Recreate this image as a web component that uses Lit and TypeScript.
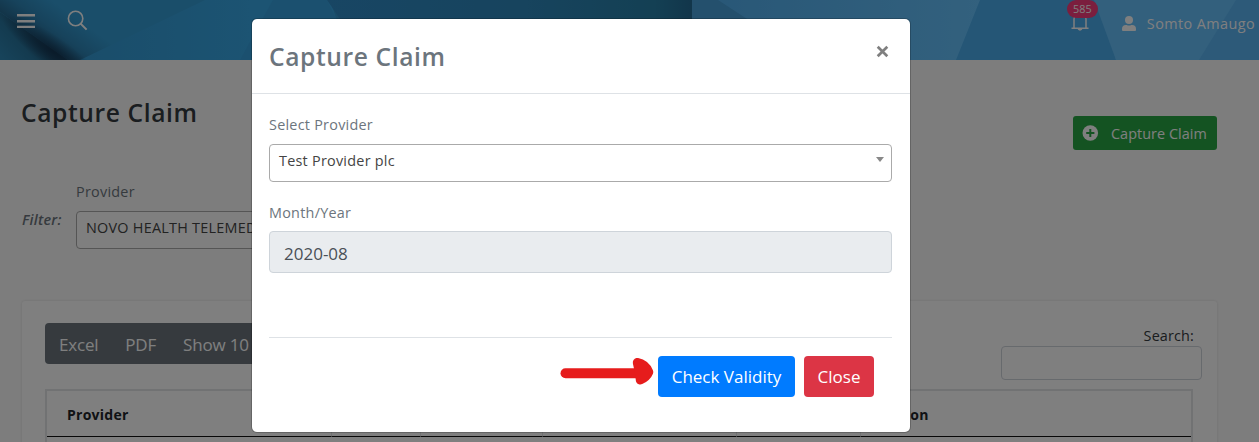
import { LitElement, html, css, svg } from "lit";
import { customElement } from "lit/decorators.js";

const headerArt = svg`
  <defs>
    <linearGradient id="g-shadow" gradientUnits="userSpaceOnUse" x1="33" y1="36" x2="56" y2="4">
      <stop offset="0" stop-color="#266890"/>
      <stop offset=".45" stop-color="#2e86b8"/>
      <stop offset="1" stop-color="#349cd4"/>
    </linearGradient>
    <radialGradient id="g-dark" gradientUnits="userSpaceOnUse" cx="0" cy="0" r="1" gradientTransform="translate(54 52) rotate(35) scale(62 15)">
      <stop offset="0" stop-color="#102c48" stop-opacity=".75"/>
      <stop offset="1" stop-color="#102c48" stop-opacity="0"/>
    </radialGradient>
    <linearGradient id="g-corner" gradientUnits="userSpaceOnUse" x1="5" y1="60" x2="33" y2="36">
      <stop offset="0" stop-color="#2e86b4"/>
      <stop offset=".6" stop-color="#28769f"/>
      <stop offset="1" stop-color="#205678"/>
    </linearGradient>
    <linearGradient id="g-mid" gradientUnits="userSpaceOnUse" x1="325" y1="0" x2="692" y2="0">
      <stop offset="0" stop-color="#308cc8"/>
      <stop offset=".55" stop-color="#2e88bc"/>
      <stop offset=".9" stop-color="#2880a8"/>
      <stop offset="1" stop-color="#246c96"/>
    </linearGradient>
    <linearGradient id="g-ray" gradientUnits="userSpaceOnUse" x1="80" y1="0" x2="250" y2="0">
      <stop offset="0" stop-color="#349ad4"/>
      <stop offset="1" stop-color="#38a8e6"/>
    </linearGradient>
    <linearGradient id="g-right" gradientUnits="userSpaceOnUse" x1="692" y1="0" x2="980" y2="0">
      <stop offset="0" stop-color="#50aeee"/>
      <stop offset="1" stop-color="#66c2fc"/>
    </linearGradient>
  </defs>
  <rect width="1259" height="60" fill="#3498d0"/>
  <polygon points="0,0 330,0 330,60 68,60 0,12" fill="url(#g-shadow)"/>
  <polygon points="80,60 205,0 330,0 350,60" fill="url(#g-ray)"/>
  <polygon points="0,12 68,60 0,60" fill="url(#g-corner)"/>
  <rect width="130" height="60" fill="url(#g-dark)"/>
  <polygon points="240,60 273,0 327,0 357,60" fill="#36a0de"/>
  <polygon points="327,0 692,0 692,60 368,60" fill="url(#g-mid)"/>
  <polygon points="692,0 1259,0 1259,60 692,60" fill="url(#g-right)"/>
  <polygon points="692,0 718,0 810,60 692,60" fill="#48a0da"/>
  <polygon points="980,0 1100,0 1116,60 956,60" fill="#4aacec"/>
  <polygon points="1094,0 1259,0 1259,60 1116,60" fill="#66c0fa"/>
  <polygon points="1236,0 1259,0 1259,60 1199,60" fill="#5ab4f2"/>
`;

@customElement("app-root")
class AppRoot extends LitElement {
  static styles = css`
    :host {
      display: block;
      position: relative;
      width: 1259px;
      height: 442px;
      overflow: hidden;
      background: #fbfbfb;
      font: 14.4px/20px "Open Sans", "Noto Sans", sans-serif;
      letter-spacing: 0.25px;
      color: #6c757d;
    }
    * { box-sizing: border-box; }
    h1, h2, p { margin: 0; }
    button, input { font: inherit; letter-spacing: inherit; border: 0; margin: 0; padding: 0; }
    svg { display: block; flex: none; }
    .topbar { position: relative; height: 60px; }
    .art { position: absolute; inset: 0; }
    .nav { position: relative; display: flex; align-items: flex-start; height: 60px; padding-left: 17px; color: #fff; }
    .burger { margin-top: 13px; }
    .find { margin: 10px 0 0 32px; }
    .account { display: flex; margin-left: auto; padding: 14px 4px 0 0; letter-spacing: 0.42px; }
    .bell { position: relative; margin: -2px 32px 0 0; }
    .count {
      position: absolute; left: -3px; top: -12px; width: 31px; height: 18px;
      border-radius: 9px; background: #f63c7c;
      font-size: 10.8px; line-height: 18px; text-align: center; letter-spacing: 0;
    }
    .user { margin: 2px 11px 0 0; }
    .head { display: flex; justify-content: space-between; height: 118px; padding: 35px 42px 0 21px; }
    .title { font-size: 24.6px; line-height: 36px; font-weight: 600; letter-spacing: 0.6px; color: #343a40; }
    .add {
      display: flex; align-items: center; width: 144px; height: 34px; margin-top: 21px; padding-left: 9px;
      border-radius: 3px; background: #28a745; color: #fff; letter-spacing: 0.06px;
    }
    .add span { padding-top: 1px; }
    .add svg { margin-right: 12px; }
    .filter { display: flex; height: 123px; padding: 4px 0 0 22px; }
    .filter-name { width: 54px; padding-top: 28px; font-style: italic; font-weight: 600; letter-spacing: 0.25px; }
    .pick {
      display: flex; justify-content: space-between; height: 38px; padding: 6px 7px 0 9px;
      border: 1px solid #aaa; border-radius: 4px; background: #fff; color: #444; white-space: nowrap;
    }
    .filter .pick { width: 320px; margin-top: 9px; }
    .card {
      width: 1195px; height: 200px; margin-left: 22px; padding: 22px 24px 0 23px;
      background: #fff; border-radius: 3px; box-shadow: 0 0 3px rgba(0, 0, 0, 0.12);
    }
    .tools { display: flex; justify-content: space-between; height: 66px; }
    .group {
      display: flex; gap: 27px; width: 330px; height: 41px; padding-left: 14px; border-radius: 4px;
      background: #6c757d; color: #fff; font-size: 17px; line-height: 43px; letter-spacing: -0.2px;
    }
    .search { width: 201px; margin-right: -9px; color: #343a40; }
    .search-name { padding: 3px 8px 0 0; text-align: right; letter-spacing: 0.15px; }
    .search-box { height: 34px; border: 1px solid #ced4da; border-radius: 4px; }
    .grid {
      display: grid; grid-template-columns: 285px 89px 122px 194px 124px 1fr; height: 60px;
      border: 2px solid #e2e4e6; border-bottom: 0;
    }
    .cell {
      height: 46px; padding: 14px 0 0 20px; border-bottom: 1px solid #111; border-right: 1px solid #e2e4e6;
      font-weight: 700; font-size: 14px; color: #212529; letter-spacing: 0.25px;
    }
    .cell:last-child { border-right: 0; padding-left: 21px; }
    .shade { position: absolute; inset: 0; padding: 19px 0 0 252px; background: rgba(0, 0, 0, 0.5); }
    .modal {
      position: relative; width: 658px; height: 413px; border-radius: 5px; background: #fff;
      box-shadow: 0 0 0 1px rgba(0, 0, 0, 0.2);
    }
    .modal-head {
      display: flex; justify-content: space-between; height: 75px; padding: 20px 21px 0 17px;
      border-bottom: 1px solid #dee2e6;
    }
    .modal .title { color: #6c757d; }
    .x { margin-top: 6px; }
    .form { height: 244px; margin: 0 18px 0 17px; padding-top: 21px; border-bottom: 1px solid #dee2e6; }
    .form .pick { margin: 9px 0 21px; }
    .caret { margin-top: 6px; }
    .month {
      display: block; width: 100%; height: 42px; margin-top: 8px; padding: 2px 14px 0; border: 1px solid #ced4da;
      border-radius: 4px; background: #e9ecef; color: #495057; font-size: 17px; letter-spacing: 0;
    }
    .actions { display: flex; justify-content: flex-end; gap: 9px; padding: 18px 36px 0 0; }
    .btn { height: 41px; border-radius: 4px; color: #fff; font-size: 17px; letter-spacing: 0; line-height: 41px; }
    .go { width: 137px; background: #007bff; }
    .close { width: 70px; background: #dc3545; }
    .arrow { position: absolute; left: 307px; top: 336px; }
  `;

  private caret() {
    return html`<svg class="caret" width="8" height="5" viewBox="0 0 8 5"><path d="M0 0h8L4 5z" fill="#888"/></svg>`;
  }

  render() {
    return html`
      <header class="topbar">
        <svg class="art" width="1259" height="60" viewBox="0 0 1259 60">${headerArt}</svg>
        <div class="nav">
          <svg class="burger" width="18" height="16" viewBox="0 0 18 16"><path d="M0 2.3h18M0 8.3h18M0 13.9h18" stroke="#fff" stroke-width="2.4"/></svg>
          <svg class="find" width="22" height="22" viewBox="0 0 22 22" fill="none" stroke="#fff" stroke-width="1.6"><circle cx="8.6" cy="8.5" r="7.2"/><path d="M13.6 13.6l6 6" stroke-width="2"/></svg>
          <div class="account">
            <div class="bell">
              <svg width="20" height="20" viewBox="0 0 20 20" fill="none" stroke="#fff" stroke-width="1.5"><path d="M1.500 16.200h17M4 16.200V7a6 6 0 0 1 12 0v9.200"/><path d="M8 17h4q-.4 1.200-2 1.200T8 17z" fill="#fff" stroke-width=".8"/></svg>
              <span class="count">585</span>
            </div>
            <svg class="user" width="14" height="16" viewBox="0 0 14 16" fill="#fff"><circle cx="7" cy="4" r="4"/><path d="M0 15v-2a4 4 0 0 1 4-4h.7a5.6 5.6 0 0 0 4.6 0h.7a4 4 0 0 1 4 4v1q0 1-1 1H1q-1 0-1-1z"/></svg>
            <span>Somto Amaugo</span>
          </div>
        </div>
      </header>

      <section class="head">
        <h1 class="title">Capture Claim</h1>
        <button class="add">
          <svg width="17" height="16" viewBox="0 0 17 16"><circle cx="8.3" cy="8" r="7.8" fill="#fff"/><path d="M8.3 3.9v8.200M4.200 8h8.200" stroke="#28a745" stroke-width="2"/></svg>
          <span>Capture Claim</span>
        </button>
      </section>

      <section class="filter">
        <div class="filter-name">Filter:</div>
        <div>
          <div>Provider</div>
          <div class="pick"><span>NOVO HEALTH TELEMEDICINE</span>${this.caret()}</div>
        </div>
      </section>

      <section class="card">
        <div class="tools">
          <div class="group"><span>Excel</span><span>PDF</span><span>Show 10 rows</span></div>
          <div class="search">
            <div class="search-name">Search:</div>
            <div class="search-box"></div>
          </div>
        </div>
        <div class="grid">
          <div class="cell">Provider</div><div class="cell"></div><div class="cell"></div>
          <div class="cell"></div><div class="cell"></div><div class="cell">Action</div>
        </div>
      </section>

      <div class="shade">
        <div class="modal">
          <div class="modal-head">
            <h2 class="title">Capture Claim</h2>
            <svg class="x" width="13" height="13" viewBox="0 0 13 13"><path d="M1.7 1.7l9.6 9.6M11.3 1.7l-9.6 9.6" stroke="#7f7f7f" stroke-width="2.7"/></svg>
          </div>
          <div class="form">
            <div>Select Provider</div>
            <div class="pick"><span>Test Provider plc</span>${this.caret()}</div>
            <div>Month/Year</div>
            <input class="month" readonly value="2020-08" />
          </div>
          <div class="actions">
            <button class="btn go">Check Validity</button>
            <button class="btn close">Close</button>
          </div>
          <svg class="arrow" width="98" height="50" viewBox="0 0 98 50" fill="#e61c1c" stroke="#e61c1c" stroke-linecap="round" stroke-linejoin="round"><path d="M6.500 18.300H84" stroke-width="10" fill="none"/><path d="M78.300 7.500q8 1.500 11.500 9.500q-2 5-8.500 8l-1-8z" stroke-width="9"/></svg>
        </div>
      </div>
    `;
  }
}
